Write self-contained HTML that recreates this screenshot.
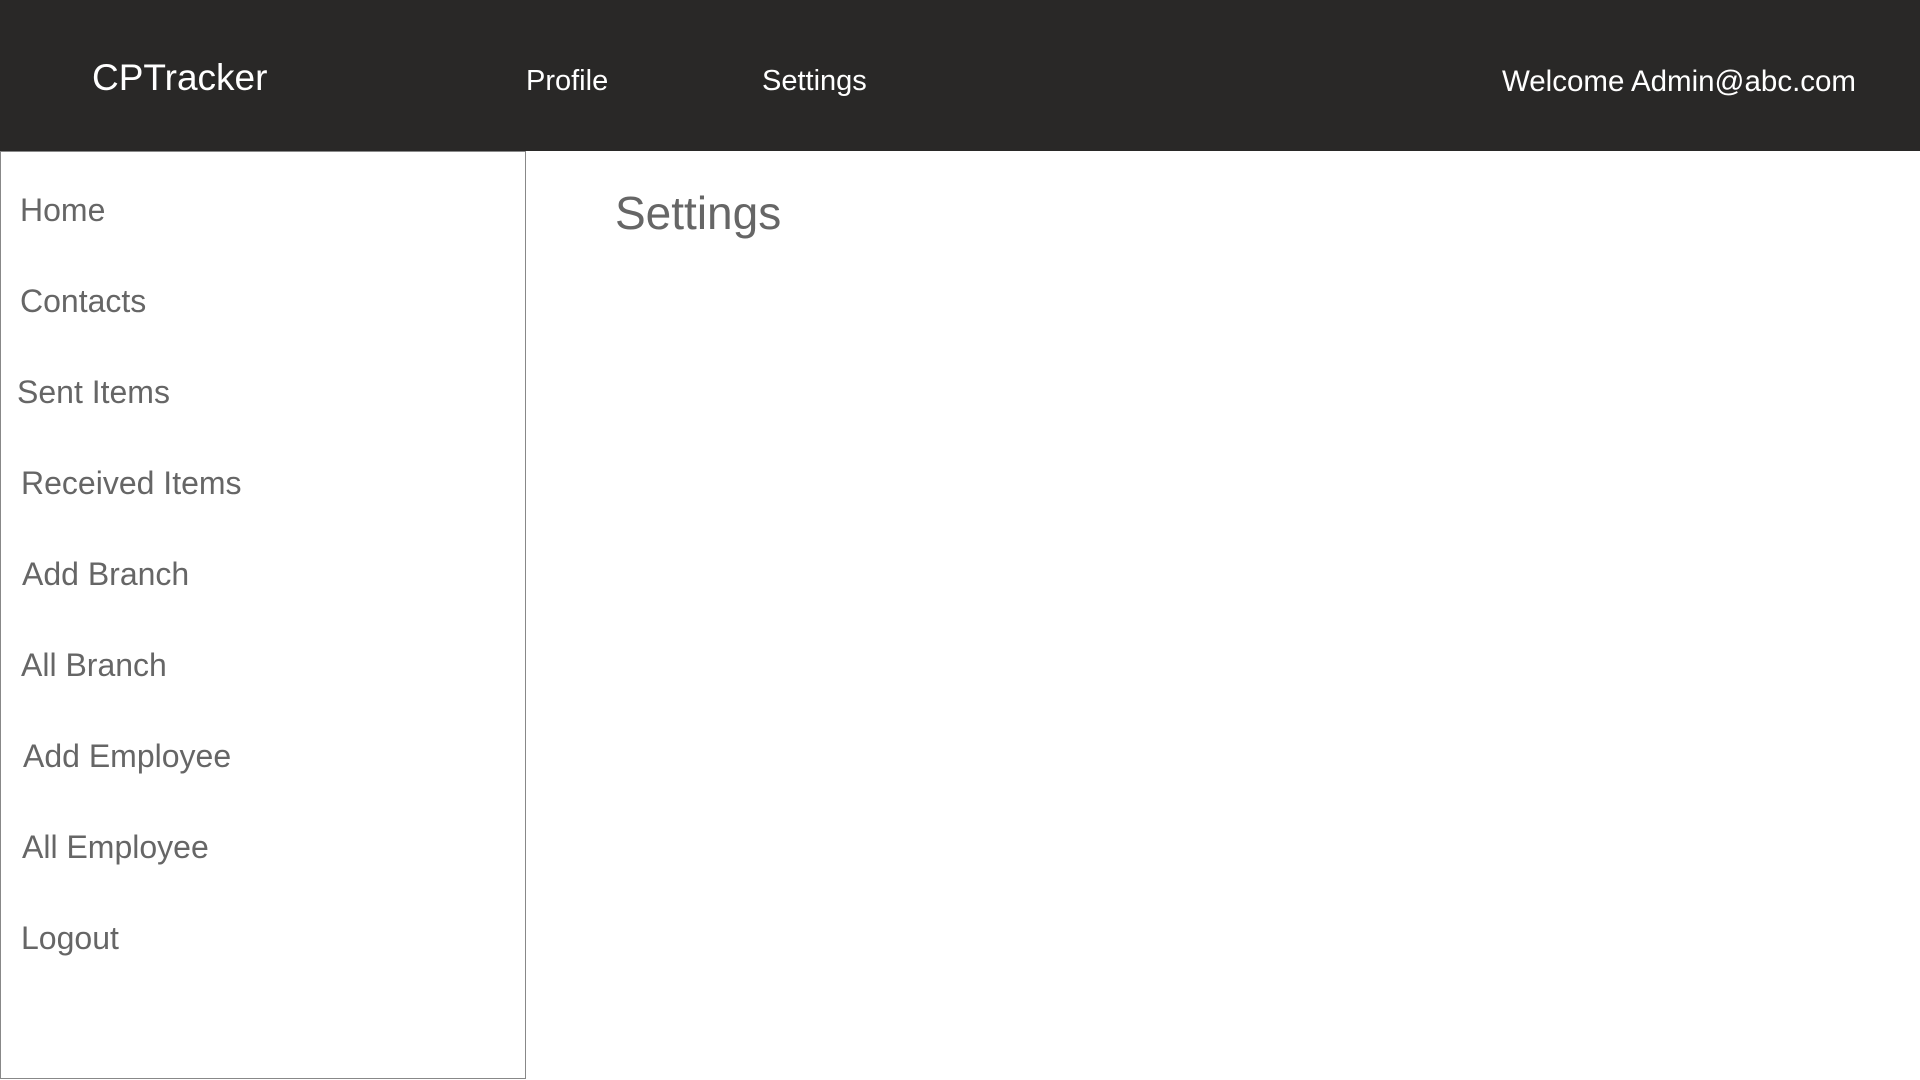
<!DOCTYPE html>
<html><head><style>
body{margin:0;width:1920px;height:1080px;background:#fff;font-family:"Liberation Sans",sans-serif;position:relative;overflow:hidden}
.hdr{position:absolute;left:0;top:0;width:1920px;height:151px;background:#292827;color:#fff}
.t{position:absolute;white-space:nowrap;line-height:1}
.side{position:absolute;left:0;top:151px;width:524px;height:926px;border:1px solid #888;box-sizing:content-box}
.m{position:absolute;font-size:32px;color:#666;white-space:nowrap;line-height:1}
</style></head><body>
<div class="hdr">
<div class="t" style="left:92px;top:59px;font-size:37px">CPTracker</div>
<div class="t" style="left:526px;top:67px;font-size:29px">Profile</div>
<div class="t" style="left:762px;top:67px;font-size:29px">Settings</div>
<div class="t" style="right:64px;top:67px;font-size:29.5px">Welcome Admin@abc.com</div>
</div>
<div class="side">
<div class="m" style="left:19px;top:42px">Home</div>
<div class="m" style="left:19px;top:133px">Contacts</div>
<div class="m" style="left:16px;top:224px">Sent Items</div>
<div class="m" style="left:20px;top:315px">Received Items</div>
<div class="m" style="left:21px;top:406px">Add Branch</div>
<div class="m" style="left:20px;top:497px">All Branch</div>
<div class="m" style="left:22px;top:588px">Add Employee</div>
<div class="m" style="left:21px;top:679px">All Employee</div>
<div class="m" style="left:20px;top:770px">Logout</div>
</div>
<div class="t" style="left:615px;top:190px;font-size:46px;color:#666">Settings</div>
</body></html>
